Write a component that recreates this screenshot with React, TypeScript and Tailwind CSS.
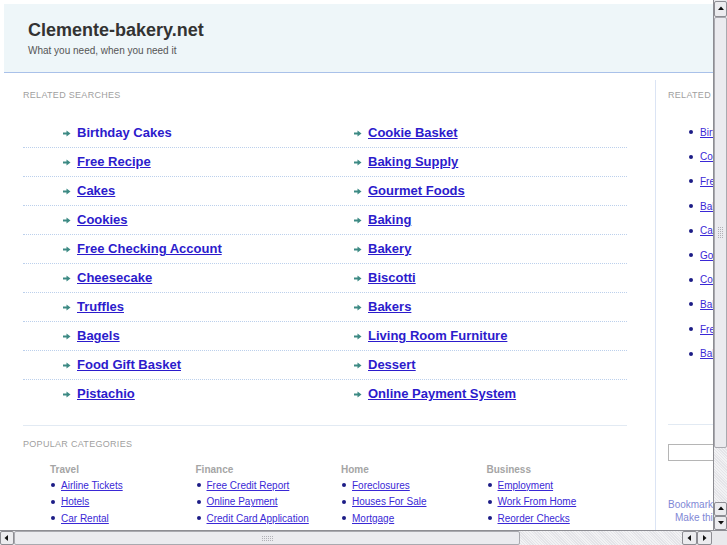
import React from 'react';

const related = [
  ['Birthday Cakes', 'Cookie Basket'],
  ['Free Recipe', 'Baking Supply'],
  ['Cakes', 'Gourmet Foods'],
  ['Cookies', 'Baking'],
  ['Free Checking Account', 'Bakery'],
  ['Cheesecake', 'Biscotti'],
  ['Truffles', 'Bakers'],
  ['Bagels', 'Living Room Furniture'],
  ['Food Gift Basket', 'Dessert'],
  ['Pistachio', 'Online Payment System'],
];

const categories = [
  { title: 'Travel', links: ['Airline Tickets', 'Hotels', 'Car Rental'] },
  { title: 'Finance', links: ['Free Credit Report', 'Online Payment', 'Credit Card Application'] },
  { title: 'Home', links: ['Foreclosures', 'Houses For Sale', 'Mortgage'] },
  { title: 'Business', links: ['Employment', 'Work From Home', 'Reorder Checks'] },
];

const sideLinks = [
  'Birthday Cakes',
  'Cookie Basket',
  'Free Recipe',
  'Baking Supply',
  'Cakes',
  'Gourmet Foods',
  'Cookies',
  'Baking',
  'Free Checking Account',
  'Bakery',
];

const Arrow = () => (
  <svg width="8" height="7" viewBox="0 0 8 7" className="shrink-0">
    <rect x="0" y="2.5" width="4" height="2" fill="#3d8a84" />
    <path d="M3.5 0.5 L7.5 3.5 L3.5 6.5 Z" fill="#3d8a84" />
  </svg>
);

const Dot = () => <span className="inline-block w-[4px] h-[4px] rounded-full bg-[#1c1c86] shrink-0" />;

const Tri = ({ dir }: { dir: 'up' | 'down' | 'left' | 'right' }) => {
  const d = {
    up: 'M1 5 L4 1.5 L7 5 Z',
    down: 'M1 2 L4 5.5 L7 2 Z',
    left: 'M5 1 L1.5 4 L5 7 Z',
    right: 'M2 1 L5.5 4 L2 7 Z',
  }[dir];
  return (
    <svg width="8" height="8" viewBox="0 0 8 8">
      <path d={d} fill="#111" />
    </svg>
  );
};

const Btn = ({ dir, className = '' }: { dir: 'up' | 'down' | 'left' | 'right'; className?: string }) => (
  <div className={`flex items-center justify-center bg-[#ececef] border border-[#8d8d93] rounded-[2px] ${className}`}>
    <Tri dir={dir} />
  </div>
);

const Grip = ({ vertical }: { vertical?: boolean }) => (
  <div className={`grid gap-[1px] ${vertical ? 'grid-cols-3' : 'grid-cols-6'}`}>
    {Array.from({ length: 18 }).map((_, i) => (
      <span key={i} className="w-[1px] h-[1px] bg-[#b0b0b6]" />
    ))}
  </div>
);

export default function App() {
  return (
    <div className="w-[727px] h-[545px] flex flex-col overflow-hidden bg-white font-['Liberation_Sans',Arial,sans-serif]">
      <div className="flex flex-1 min-h-0">
        <div className="flex-1 min-w-0 overflow-hidden pt-[4px] pl-[4px]">
          <div className="w-[800px]">
            {/* header */}
            <div className="h-[69px] bg-[#eef6f9] border-b border-[#a9c1e9] pl-[24px] pt-[15px]">
              <div className="text-[18px] leading-[22px] font-bold text-[#333]">Clemente-bakery.net</div>
              <div className="text-[10px] leading-[13px] text-[#555] mt-[3px]">What you need, when you need it</div>
            </div>

            <div className="flex">
              {/* main */}
              <div className="w-[651px] pl-[19px] shrink-0">
                <div className="w-[604px]">
                  <div className="pt-[16px] text-[9px] leading-[12px] tracking-[0.3px] text-[#a0a0a0]">RELATED SEARCHES</div>
                  <div className="mt-[18px]">
                    {related.map((row, i) => (
                      <div
                        key={i}
                        className={`flex items-center pl-[40px] ${i < related.length - 1 ? 'h-[29px] border-b border-dotted border-[#bcd0ec]' : 'h-[28px]'}`}
                      >
                        {row.map((t, j) => (
                          <div key={j} className="w-[291px] shrink-0 flex items-center gap-[6px]">
                            <Arrow />
                            <a
                              href="#"
                              className={`text-[13px] font-bold text-[#2c1bcc] whitespace-nowrap ${i === 0 && j === 0 ? 'no-underline' : 'underline'}`}
                            >
                              {t}
                            </a>
                          </div>
                        ))}
                      </div>
                    ))}
                  </div>
                  <div className="mt-[17px] border-t border-[#e2eaf3]" />
                  <div className="mt-[12px] text-[9px] leading-[12px] tracking-[0.3px] text-[#a0a0a0]">POPULAR CATEGORIES</div>
                  <div className="mt-[13px] pl-[27px] flex">
                    {categories.map((c) => (
                      <div key={c.title} className="w-[145.5px] shrink-0">
                        <div className="text-[10px] leading-[13px] font-bold text-[#a5a5a5]">{c.title}</div>
                        <div className="mt-[1px]">
                          {c.links.map((l) => (
                            <div key={l} className="h-[16.5px] flex items-center gap-[6px] pl-[1px]">
                              <Dot />
                              <a href="#" className="text-[10px] text-[#3a28d6] underline whitespace-nowrap">
                                {l}
                              </a>
                            </div>
                          ))}
                        </div>
                      </div>
                    ))}
                  </div>
                </div>
              </div>

              {/* sidebar */}
              <div className="mt-[7px] border-l border-[#dbe4f4] pl-[12px] w-[149px] shrink-0 h-[600px]">
                <div className="pt-[9px] text-[9px] leading-[12px] tracking-[0.3px] text-[#a0a0a0] whitespace-nowrap">RELATED SEARCHES</div>
                <div className="mt-[19px] pl-[21px]">
                  {sideLinks.map((l) => (
                    <div key={l} className="h-[24.6px] flex items-center gap-[7px]">
                      <Dot />
                      <a href="#" className="text-[10px] text-[#3a28d6] underline whitespace-nowrap">
                        {l}
                      </a>
                    </div>
                  ))}
                </div>
                <div className="mt-[58px] border-t border-[#e2eaf3]" />
                <input className="mt-[19px] w-[120px] h-[17px] border border-[#b5b5b5] bg-white" />
                <div className="mt-[34px] text-[10px] leading-[13px] text-[#7f88d6] whitespace-nowrap">Bookmark this page</div>
                <div className="pl-[7px] text-[10px] leading-[13px] text-[#7f88d6] whitespace-nowrap">Make this your homepage</div>
              </div>
            </div>
          </div>
        </div>

        {/* vertical scrollbar */}
        <div className="w-[14px] shrink-0 flex flex-col bg-[#e9e9ec] border-l border-[#8d8d93]">
          <Btn dir="up" className="h-[16px] mt-[1px]" />
          <div className="h-[431px] bg-[#ebebef] border border-[#a9a9af] rounded-[2px] flex items-center justify-center">
            <Grip vertical />
          </div>
          <div className="flex-1 bg-[repeating-linear-gradient(45deg,#f2f2f4_0px,#f2f2f4_1px,#e4e4e8_1px,#e4e4e8_2px)]" />
          <Btn dir="up" className="h-[14px]" />
          <Btn dir="down" className="h-[14px]" />
        </div>
      </div>

      {/* horizontal scrollbar */}
      <div className="h-[15px] shrink-0 flex bg-[#e9e9ec] border-t border-[#8d8d93]">
        <Btn dir="left" className="w-[14px]" />
        <div className="w-[506px] bg-[#ebebef] border border-[#a9a9af] rounded-[2px] flex items-center justify-center">
          <Grip />
        </div>
        <div className="flex-1 bg-[repeating-linear-gradient(45deg,#f2f2f4_0px,#f2f2f4_1px,#e4e4e8_1px,#e4e4e8_2px)]" />
        <Btn dir="left" className="w-[15px]" />
        <Btn dir="right" className="w-[15px]" />
        <div className="w-[15px] bg-[#e9e9ec]" />
      </div>
    </div>
  );
}
